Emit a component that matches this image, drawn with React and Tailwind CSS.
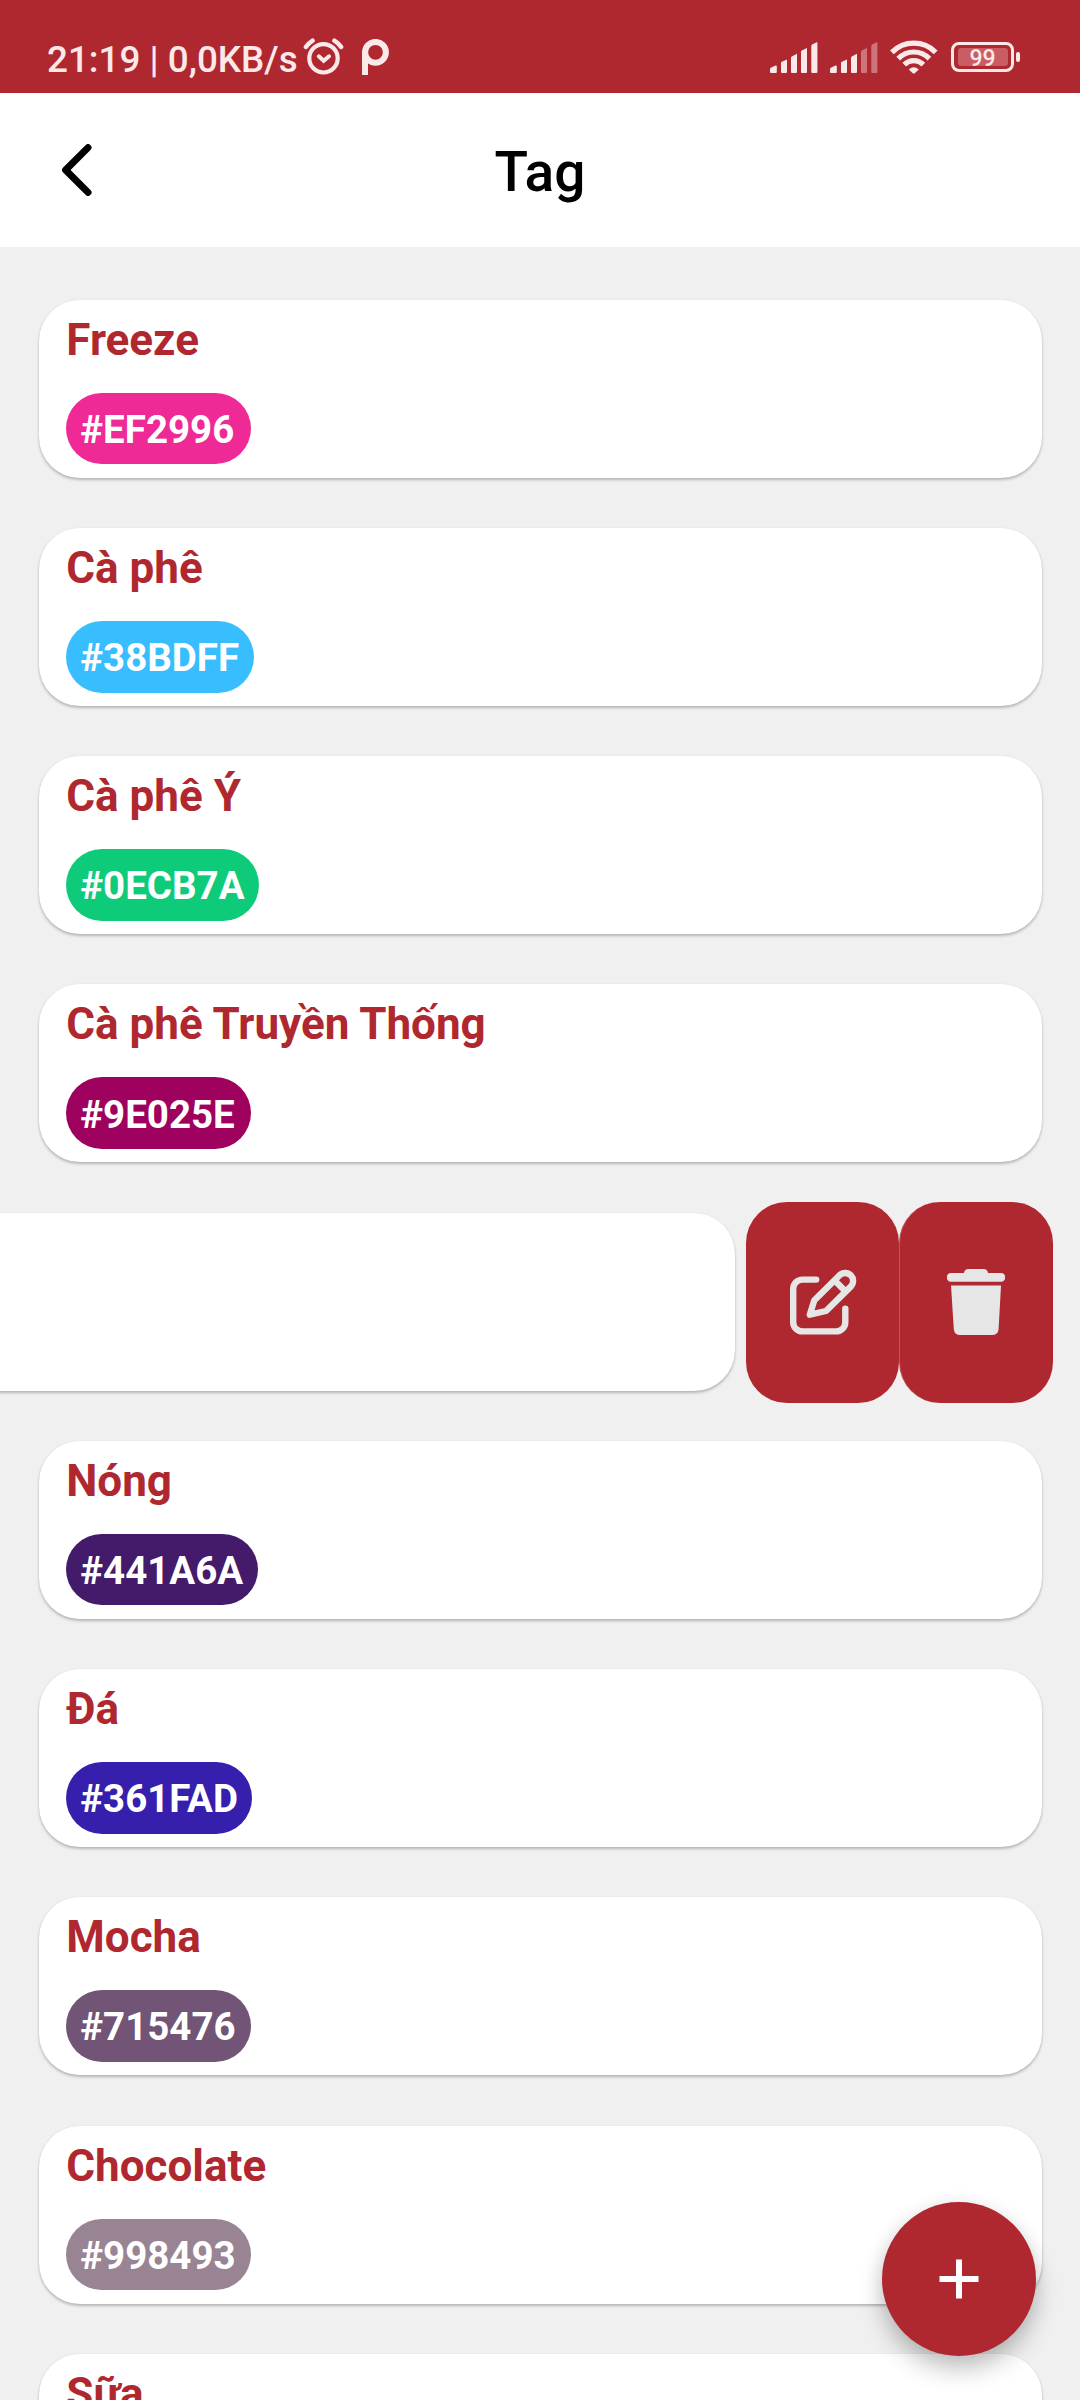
const tagsBefore = [
  { name: 'Freeze', color: '#EF2996' },
  { name: 'Cà phê', color: '#38BDFF' },
  { name: 'Cà phê Ý', color: '#0ECB7A' },
  { name: 'Cà phê Truyền Thống', color: '#9E025E' },
];

const tagsAfter = [
  { name: 'Nóng', color: '#441A6A' },
  { name: 'Đá', color: '#361FAD' },
  { name: 'Mocha', color: '#715476' },
  { name: 'Chocolate', color: '#998493' },
  { name: 'Sữa', color: '#C9A27E' },
];

const cardShadow = 'shadow-[0_2px_3px_rgba(0,0,0,0.24),0_0_2px_rgba(0,0,0,0.06)]';

function SignalIcon({ active }) {
  const bars = [
    'M0 27.2 Q0 26.4 0.8 25.8 L5.6 23.6 Q6.8 23.2 6.8 24.4 V30 Q6.8 31 5.8 31 H1 Q0 31 0 30 Z',
    'M11 21 Q11 20.2 11.8 19.8 L17 17.4 V30 Q17 31 16 31 H12 Q11 31 11 30 Z',
    'M21 16 Q21 15 21.8 14.6 L27 11.8 V30 Q27 31 26 31 H22 Q21 31 21 30 Z',
    'M31 10 Q31 9 31.8 8.6 L37 6 V30 Q37 31 36 31 H32 Q31 31 31 30 Z',
    'M41.3 4 Q41.3 3 42.1 2.5 L47.4 0 V30 Q47.4 31 46.4 31 H42.3 Q41.3 31 41.3 30 Z',
  ];
  return (
    <svg width="48" height="31" viewBox="0 0 48 31" fill="#fbe9ea">
      {bars.map((d, i) => (
        <path key={i} d={d} opacity={i < active ? 1 : 0.4} />
      ))}
    </svg>
  );
}

function StatusBar() {
  return (
    <div className="flex h-[93px] items-start bg-[#b0282f] text-[#fbe9ea]">
      <span className="mt-[38px] ml-[47px] w-[256px] whitespace-nowrap text-[36.8px] leading-[44px] font-medium">
        21:19 | 0,0KB/s
      </span>
      <svg className="mt-[38px]" width="41" height="38" viewBox="0 0 41 38" fill="none" stroke="#fbe9ea" strokeLinecap="round">
        <circle cx="20.5" cy="20.3" r="14.2" strokeWidth="4.2" />
        <path d="M2.9 8.9 Q5.7 5 9.6 2.6 M31.4 2.6 Q35.3 5 38.1 8.9" strokeWidth="4.4" />
        <path d="M15.8 18.3 L20.7 22.8 L26 18.3" strokeWidth="4" />
      </svg>
      <svg className="mt-[39px] ml-[18px]" width="27" height="36" viewBox="0 0 27 36" fill="none" stroke="#fbe9ea" strokeWidth="6">
        <circle cx="13.5" cy="13.3" r="10.4" />
        <path d="M3 36 V13" />
      </svg>
      <div className="mt-[42px] ml-auto mr-[60px] flex items-start">
        <SignalIcon active={5} />
        <div className="ml-[12px] flex">
          <SignalIcon active={3} />
        </div>
        <svg className="-mt-[2px] ml-[12px]" width="48" height="34" viewBox="0 0 48 34" fill="none" stroke="#fbe9ea" strokeWidth="5.2">
          <path d="M1.9 12.3 Q11 3.2 23.8 3.2 Q36.6 3.2 45.7 12.3" />
          <path d="M8.2 18.6 Q14.8 12 23.8 12 Q32.8 12 39.4 18.6" />
          <path d="M14.2 24.6 Q18.4 20.6 23.8 20.6 Q29.2 20.6 33.4 24.6" />
          <path d="M18.8 29.4 Q23.8 25 28.8 29.4 L24.8 33.2 Q23.8 34 22.8 33.2 Z" fill="#fbe9ea" stroke="none" />
        </svg>
        <div className="ml-[13.5px] flex items-center">
          <div className="flex h-[30px] w-[63px] items-center rounded-[8px] border-3 border-[#fbe9ea] p-[3.5px]">
            <div className="flex h-[18px] w-[50px] items-center justify-center rounded-[3px] bg-[#c95d63] pt-[3px] text-[23px] leading-[18px] font-medium">
              99
            </div>
          </div>
          <div className="ml-[2px] h-[10px] w-[4px] rounded-[2px] bg-[#fbe9ea]" />
        </div>
      </div>
    </div>
  );
}

function Header() {
  return (
    <header className="grid h-[154px] grid-cols-3 items-center bg-white">
      <svg className="ml-[61px]" width="31" height="52" viewBox="0 0 31 52" fill="none" stroke="#000" strokeWidth="7" strokeLinecap="round" strokeLinejoin="round">
        <path d="M27 3.6 L4.6 26 L27 48.4" />
      </svg>
      <h1 className="pt-[3px] text-center text-[55px] leading-[64px] font-medium text-black">Tag</h1>
    </header>
  );
}

function TagCard({ name, color }) {
  return (
    <article className={'mr-[38px] ml-[39px] h-[178px] shrink-0 rounded-[41px] bg-white px-[27.3px] pt-[14px] ' + cardShadow}>
      <h2 className="text-[44px] leading-[52px] font-bold text-[#b0282f]">{name}</h2>
      <div
        className="mt-[27px] flex h-[71.5px] w-fit min-w-[184.4px] items-center rounded-[36px] pt-[1.8px] pr-[14.5px] pl-[14px] text-[38.5px] leading-[45px] font-bold text-white"
        style={{ backgroundColor: color }}
      >
        {color}
      </div>
    </article>
  );
}

function SwipedCard() {
  return (
    <div className="flex h-[178px] shrink-0 items-center">
      <div className={'-ml-[41px] h-full w-[775.5px] rounded-[41px] bg-white ' + cardShadow} />
      <button className="mt-px ml-[11px] flex h-[201px] w-[153.5px] items-center justify-center rounded-[41px] bg-[#b0282f]" aria-label="Edit">
        <svg className="mb-px ml-[1px]" width="68" height="68" viewBox="0 0 68 68" fill="none" stroke="#e6e6e6" strokeWidth="6.4" strokeLinecap="round" strokeLinejoin="round">
          <path d="M27.2 11.6 H13.4 A9.2 9.2 0 0 0 4.2 20.8 V54.2 A9.2 9.2 0 0 0 13.4 63.4 H47.1 A9.2 9.2 0 0 0 56.3 54.2 V40.6" />
          <path d="M20.8 46.7 L25.2 32.6 L50.8 7 A8 8 0 0 1 62 18.4 L37 43 Z M45.7 12.4 L56.4 23.2" />
        </svg>
      </button>
      <button className="mt-px flex h-[201px] w-[154px] items-center justify-center rounded-[41px] border-l border-[#c4555b] bg-[#b0282f] pr-[2px]" aria-label="Delete">
        <svg className="mb-px" width="58" height="66" viewBox="0 0 58 66" fill="#e6e6e6">
          <path d="M4 4 H17 Q17.5 0 21.5 0 H36.5 Q40.5 0 41 4 H54 A4.3 4.3 0 0 1 54 12.7 H4 A4.3 4.3 0 0 1 4 4 Z" />
          <path d="M4 16.5 H54 L51.6 60 Q51 66 45 66 H13 Q7.4 66 6.8 60 Z" />
        </svg>
      </button>
    </div>
  );
}

export default function App() {
  return (
    <div className="relative flex h-[2400px] w-[1080px] flex-col overflow-hidden bg-[#f0f0f0] font-[Roboto,sans-serif]">
      <StatusBar />
      <Header />
      <main className="flex min-h-0 flex-1 flex-col gap-[50.22px] overflow-hidden pt-[52.8px]">
        {tagsBefore.map((tag) => (
          <TagCard key={tag.name} {...tag} />
        ))}
        <SwipedCard />
        {tagsAfter.map((tag) => (
          <TagCard key={tag.name} {...tag} />
        ))}
      </main>
      <button
        className="absolute right-[44px] bottom-[44px] flex size-[154px] items-center justify-center rounded-full bg-[#b0282f] shadow-[0_14px_24px_rgba(0,0,0,0.22),0_2px_18px_rgba(0,0,0,0.08)]"
        aria-label="Add tag"
      >
        <svg width="40" height="40" viewBox="0 0 40 40" fill="none" stroke="#fff" strokeWidth="6">
          <path d="M20 0.5 V39.5 M0.5 20 H39.5" />
        </svg>
      </button>
    </div>
  );
}
